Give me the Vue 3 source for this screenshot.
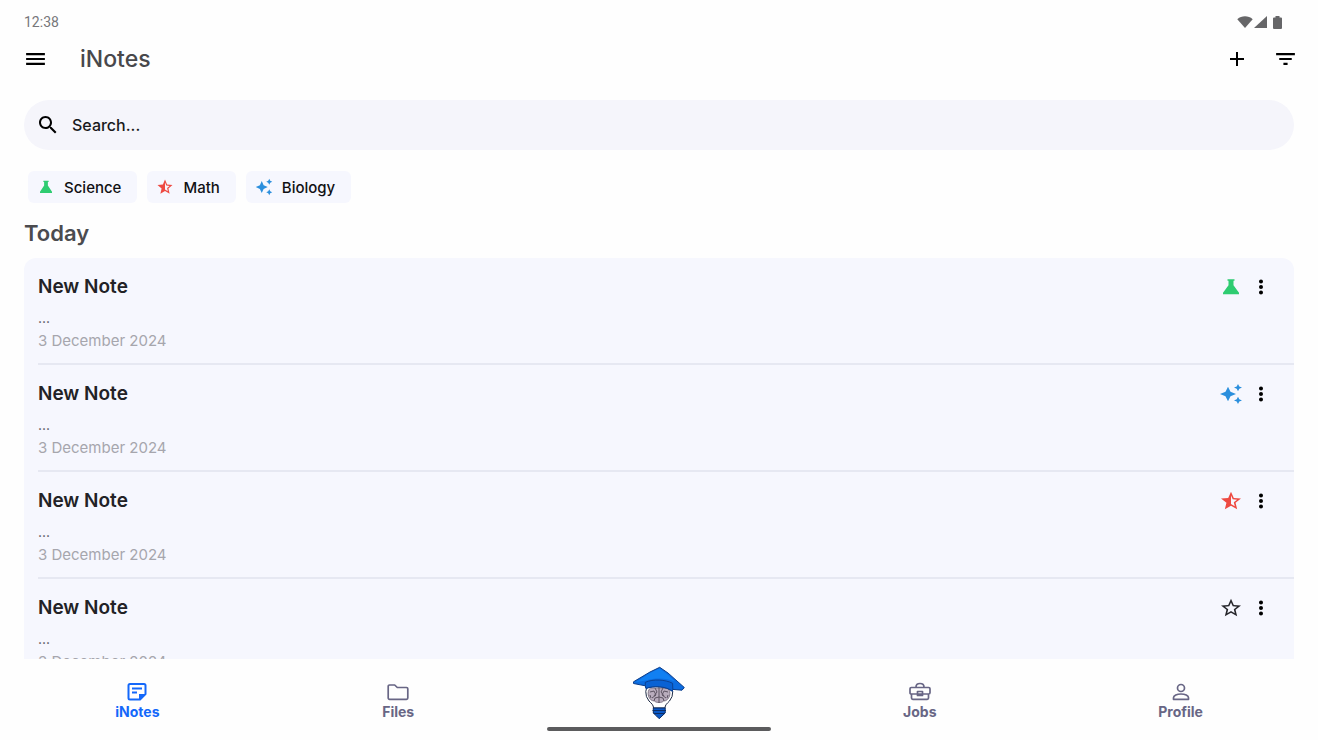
<template>
  <div class="app">
    <!-- system status bar -->
    <div class="status-bar">
      <span class="clock">12:38</span>
      <div class="status-icons">
        <svg width="16" height="12" viewBox="0 0 16 12"><path d="M8 12 0.3 3.2C4.700 -0.6 11.300 -0.6 15.700 3.200Z" /></svg>
        <svg width="13" height="12" viewBox="0 0 13 12"><path d="M13 0V12H0Z" /></svg>
        <svg class="battery" width="9" height="13" viewBox="0 0 9 13"><path d="M2.500 0h4v1.500H8a1 1 0 0 1 1 1V12a1 1 0 0 1-1 1H1a1 1 0 0 1-1-1V2.500a1 1 0 0 1 1-1h1.500Z" /></svg>
      </div>
    </div>

    <header class="app-bar">
      <button class="icon-btn" type="button" aria-label="Menu">
        <svg width="25" height="24" viewBox="0 0 24 24" preserveAspectRatio="none"><path d="M3 18h18v-2.200H3V18zm0-4.900h18v-2.200H3v2.200zM3 6v2.200h18V6H3z" /></svg>
      </button>
      <h1 class="title">iNotes</h1>
      <div class="actions">
        <button class="icon-btn" type="button" aria-label="Add note">
          <svg width="24" height="24" viewBox="0 0 24 24"><path d="M19 13h-6v6h-2v-6H5v-2h6V5h2v6h6v2z" /></svg>
        </button>
        <button class="icon-btn" type="button" aria-label="Filter">
          <svg width="25" height="24" viewBox="0 0 24 24" preserveAspectRatio="none"><path d="M10 18h4v-2.200h-4V18zM3 6v2.200h18V6H3zm3 7.100h12v-2.200H6v2.200z" /></svg>
        </button>
      </div>
    </header>

    <main class="content">
      <label class="search" for="search">
        <svg width="24" height="24" viewBox="0 0 24 24"><path d="M15.500 14h-.79l-.28-.27C15.410 12.590 16 11.110 16 9.500 16 5.910 13.090 3 9.500 3S3 5.910 3 9.500 5.910 16 9.500 16c1.610 0 3.090-.59 4.230-1.570l.27.28v.79l5 4.990L20.490 19l-4.990-5zm-6 0C7.010 14 5 11.990 5 9.500S7.010 5 9.500 5 14 7.010 14 9.500 11.990 14 9.500 14z" /></svg>
        <input id="search" v-model="query" type="text" placeholder="Search..." aria-label="Search notes" />
      </label>

      <div class="chips">
        <button v-for="chip in chips" :key="chip.label" class="chip" type="button">
          <svg width="18" height="18" viewBox="0 0 24 24" :class="chip.icon">
            <path :d="icons[chip.icon]" />
          </svg>
          {{ chip.label }}
        </button>
      </div>

      <h2 class="section-title">Today</h2>

      <ul class="notes">
        <li v-for="note in filteredNotes" :key="note.id" class="note">
          <div class="note-text">
            <h3>{{ note.title }}</h3>
            <p class="excerpt">{{ note.excerpt }}</p>
            <p class="date">{{ note.date }}</p>
          </div>
          <div class="note-actions">
            <svg width="24" height="22" viewBox="0 0 24 24" preserveAspectRatio="none" :class="note.icon">
              <path :d="icons[note.icon]" />
            </svg>
            <button class="icon-btn more" type="button" aria-label="More options">
              <svg width="22" height="22" viewBox="0 0 24 24"><path :d="icons.more" /></svg>
            </button>
          </div>
        </li>
      </ul>
    </main>

    <footer class="footer">
      <nav class="tabs">
        <a href="#notes" class="tab active">
          <svg width="24" height="22" viewBox="0 0 24 22">
            <path class="line" d="M5 3h14a1.500 1.500 0 0 1 1.500 1.500V13l-5.500 5.500H5A1.500 1.500 0 0 1 3.500 17V4.500A1.500 1.500 0 0 1 5 3ZM7 7.500h10M7 11.500h5" />
            <path class="solid" d="M14 19v-6h7Z" />
          </svg>
          <span>iNotes</span>
        </a>
        <a href="#files" class="tab">
          <svg width="24" height="22" viewBox="0 0 24 22">
            <path class="line" d="M3.500 4h5.200l2.600 2.500h9.200a1.300 1.300 0 0 1 1.300 1.300v9.200a1.300 1.300 0 0 1-1.300 1.300h-17A1.300 1.300 0 0 1 2.200 17V5.300A1.300 1.300 0 0 1 3.500 4Z" />
          </svg>
          <span>Files</span>
        </a>
        <a href="#assistant" class="tab logo" aria-label="Assistant">
          <svg width="52" height="54" viewBox="0 0 52 54">
            <!-- bulb glass -->
            <path d="M20.500 42c0-3-2-4.500-4.500-7a13.500 13.500 0 1 1 20.500 0c-2.500 2.500-4.500 4-4.500 7Z" fill="#fff" stroke="#1d2a44" stroke-width="1" />
            <!-- brain -->
            <path d="M15.500 30c-1-3 0-7 2-8h17c2 1 3 5 2 8-1 3-3 5-6 5-1.500 2-7.500 2-9 0-3 0-5-2-6-5Z" fill="#b9adbd" stroke="#857b8b" />
            <path d="M26 21v16M17 26l4-1 2 4-4 3M22 22l2 4-3 4M21 35l1-3 4-1M18 32l-1-3M35 26l-4-1-2 4 4 3M30 22l-2 4 3 4M31 35l-1-3-4-1M34 32l1-3" fill="none" stroke="#5d5462" stroke-width="1" />
            <!-- graduation cap -->
            <path d="M26.700 1.300 35 7l16.300 14.500-2.300 2.700-9.200-.8-.5 1.800C33 20 20 19.500 13 22.500l-.7-2.700L.5 17.500V15.800L17 6Z" fill="#0c6ce0" stroke="#0b3d8a" stroke-linejoin="round" />
            <path d="M26.500 2.500 34 8l8 7.500c-9-3.500-19-4-29-1L3 16l14-9Z" fill="#1180f2" />
            <path d="M12.300 19.500v-3.200c8-3.500 20-2.800 27.300 1l.2 6.100-.5 1.800C33 20 20 19.500 13 22.500Z" fill="#0962d4" stroke="#0b3d8a" stroke-width=".9" />
            <!-- screw base -->
            <path d="M20.300 42h11.900v5l-3.200 3-2.800 2.700-2.700-2.700-3.200-3Z" fill="#0a58c7" stroke="#0b2d66" />
            <path d="M19.500 44.500h13.500M20.500 47.500h11.500" stroke="#0b2d66" stroke-width="1" />
          </svg>
        </a>
        <a href="#jobs" class="tab">
          <svg width="24" height="22" viewBox="0 0 24 22">
            <path class="line" d="M8 6c0-2.600 1-3.500 4-3.500S16 3.400 16 6M3.300 6.500h17.400q1.300 0 1.300 1.200v4q0 1.300-1.300 1.300H3.300Q2 13 2 11.700v-4Q2 6.500 3.300 6.500ZM3.500 13v4q0 1.300 1.300 1.300h14.400q1.300 0 1.300-1.300v-4M9.500 10.500h5v4h-5Z" />
          </svg>
          <span>Jobs</span>
        </a>
        <a href="#profile" class="tab">
          <svg width="24" height="22" viewBox="0 0 24 22">
            <circle class="line" cx="12" cy="7" r="3.500" />
            <path class="line" d="M4.500 18.300v-1.500c0-2.200 3.500-3.800 7.500-3.800s7.500 1.600 7.500 3.800v1.500Z" />
          </svg>
          <span>Profile</span>
        </a>
      </nav>
      <div class="home-indicator"></div>
    </footer>
  </div>
</template>

<script setup>
import { ref, computed } from 'vue';

const query = ref('');

const icons = {
  flask: 'M8.500 3.500h7v1.800h-1V10l5.500 8.300V20H4v-1.700L9.500 10V5.300h-1z',
  sparkle: 'M9 4l2.500 5.500L17 12l-5.500 2.500L9 20l-2.500-5.500L1 12l5.500-2.500zM19 1l1.300 2.700L23 5l-2.700 1.300L19 9l-1.300-2.700L15 5l2.700-1.300zM19 15l1.300 2.700L23 19l-2.700 1.300L19 23l-1.300-2.700L15 19l2.700-1.300z',
  starHalf: 'M22 9.240l-7.190-.62L12 2 9.190 8.630 2 9.240l5.460 4.730L5.820 21 12 17.270 18.180 21l-1.630-7.030L22 9.240zM12 15.400V6.100l1.710 4.040 4.380.38-3.320 2.880 1 4.280L12 15.400z',
  starOutline: 'M22 9.240l-7.190-.62L12 2 9.190 8.630 2 9.240l5.460 4.730L5.820 21 12 17.270 18.180 21l-1.630-7.030L22 9.240zM12 15.400l-3.760 2.270 1-4.280-3.320-2.880 4.380-.38L12 6.100l1.710 4.040 4.380.38-3.320 2.880 1 4.280L12 15.400z',
  more: 'M12 8.200a2.200 2.200 0 1 0 0-4.400 2.200 2.200 0 0 0 0 4.400zm0 1.600a2.200 2.200 0 1 0 0 4.400 2.200 2.200 0 0 0 0-4.400zm0 6a2.200 2.200 0 1 0 0 4.400 2.200 2.200 0 0 0 0-4.400z'
};

const chips = [
  { label: 'Science', icon: 'flask' },
  { label: 'Math', icon: 'starHalf' },
  { label: 'Biology', icon: 'sparkle' }
];

const notes = ref([
  { id: 1, title: 'New Note', excerpt: '...', date: '3 December 2024', icon: 'flask' },
  { id: 2, title: 'New Note', excerpt: '...', date: '3 December 2024', icon: 'sparkle' },
  { id: 3, title: 'New Note', excerpt: '...', date: '3 December 2024', icon: 'starHalf' },
  { id: 4, title: 'New Note', excerpt: '...', date: '3 December 2024', icon: 'starOutline' }
]);

const filteredNotes = computed(() => {
  return notes.value.filter((note) => note.title.toLowerCase().includes(query.value.toLowerCase()));
});
</script>

<style>
body {
  margin: 0;
  background: #fefefe;
}
</style>

<style scoped>
.app {
  display: flex;
  flex-direction: column;
  height: 100vh;
  overflow: hidden;
  background: #fefefe;
  color: #111114;
  font-family: Inter, "Open Sans", sans-serif;
}

h1,
h2,
h3,
p,
ul {
  margin: 0;
  padding: 0;
}

button {
  border: 0;
  font-family: inherit;
  cursor: pointer;
}

svg {
  display: block;
  flex: none;
}

.status-bar {
  display: flex;
  align-items: center;
  justify-content: space-between;
  height: 20px;
  padding: 12px 36px 0 24px;
}

.clock {
  font-family: Roboto, sans-serif;
  font-size: 14px;
  color: #77777a;
}

.status-icons {
  display: flex;
  align-items: center;
  gap: 1px;
  fill: #666668;
}

.battery {
  margin-left: 5px;
}

.app-bar {
  display: flex;
  align-items: center;
  height: 54px;
  padding: 0 20px 0 23px;
}

.icon-btn {
  padding: 0;
  background: none;
}

.title {
  margin-left: 32px;
  font-size: 23px;
  font-weight: 500;
  color: #48484b;
}

.actions {
  display: flex;
  gap: 24px;
  margin-left: auto;
}

.content {
  display: flex;
  flex: 1;
  flex-direction: column;
  min-height: 0;
  padding: 14px 24px 0;
}

.search {
  display: flex;
  flex: none;
  align-items: center;
  gap: 12px;
  height: 50px;
  padding: 0 12px;
  border-radius: 25px;
  background: #f5f5fb;
}

.search input {
  flex: 1;
  padding: 0;
  border: 0;
  outline: none;
  background: none;
  font-family: inherit;
  font-size: 16px;
  font-weight: 500;
  color: #19191c;
}

.search input::placeholder {
  color: #19191c;
  opacity: 1;
}

.chips {
  display: flex;
  flex: none;
  gap: 10px;
  margin: 21px 4px 0;
}

.chip {
  display: flex;
  align-items: center;
  gap: 9px;
  height: 32px;
  padding: 0 16px 0 9px;
  border-radius: 6px;
  background: #f6f7fe;
  font-size: 15px;
  font-weight: 500;
  color: #111114;
}

.flask {
  fill: #2ecc71;
}

.starHalf {
  fill: #ee4a42;
}

.sparkle {
  fill: #2b8fdd;
}

.starOutline {
  fill: #26262b;
}

.section-title {
  margin: 15px 0 10px;
  font-size: 22px;
  font-weight: 600;
  line-height: 30px;
  color: #4b4b4f;
}

.notes {
  flex: 1;
  min-height: 0;
  overflow: hidden;
  border-radius: 12px 12px 0 0;
  background: #f6f7fe;
  list-style: none;
}

.note {
  display: flex;
  justify-content: space-between;
  height: 105px;
  padding: 0 22px 0 14px;
  border-bottom: 2px solid #e6e8f2;
  border-image: linear-gradient(to right, transparent 16px, #e6e8f2 16px) 2;
}

.note h3 {
  margin-top: 16px;
  font-size: 19px;
  font-weight: 600;
  line-height: 26px;
  color: #222226;
}

.excerpt {
  margin-top: 7px;
  font-size: 14px;
  line-height: 22px;
  color: #55555a;
}

.date {
  font-size: 15px;
  line-height: 24px;
  color: #a6a6ad;
}

.note-actions {
  display: flex;
  gap: 7px;
  height: 22px;
  margin-top: 18px;
}

.footer {
  display: flex;
  flex: none;
  flex-direction: column;
  align-items: center;
  padding-bottom: 9px;
}

.tabs {
  display: flex;
  box-sizing: border-box;
  width: 100%;
  height: 68px;
  padding: 0 7px;
}

.tab {
  display: flex;
  flex: 1;
  flex-direction: column;
  align-items: center;
  padding-top: 22px;
  font-size: 14px;
  font-weight: 700;
  line-height: 18px;
  color: #686685;
  text-decoration: none;
}

.tab.active {
  color: #1468fa;
}

.tab.logo {
  padding-top: 7px;
}

.line {
  fill: none;
  stroke: currentColor;
  stroke-width: 1.7;
  stroke-linejoin: round;
}

.active .line {
  stroke-width: 2;
}

.solid {
  fill: currentColor;
}

.home-indicator {
  width: 17%;
  height: 4px;
  border-radius: 2px;
  background: #5b5b5d;
}
</style>
